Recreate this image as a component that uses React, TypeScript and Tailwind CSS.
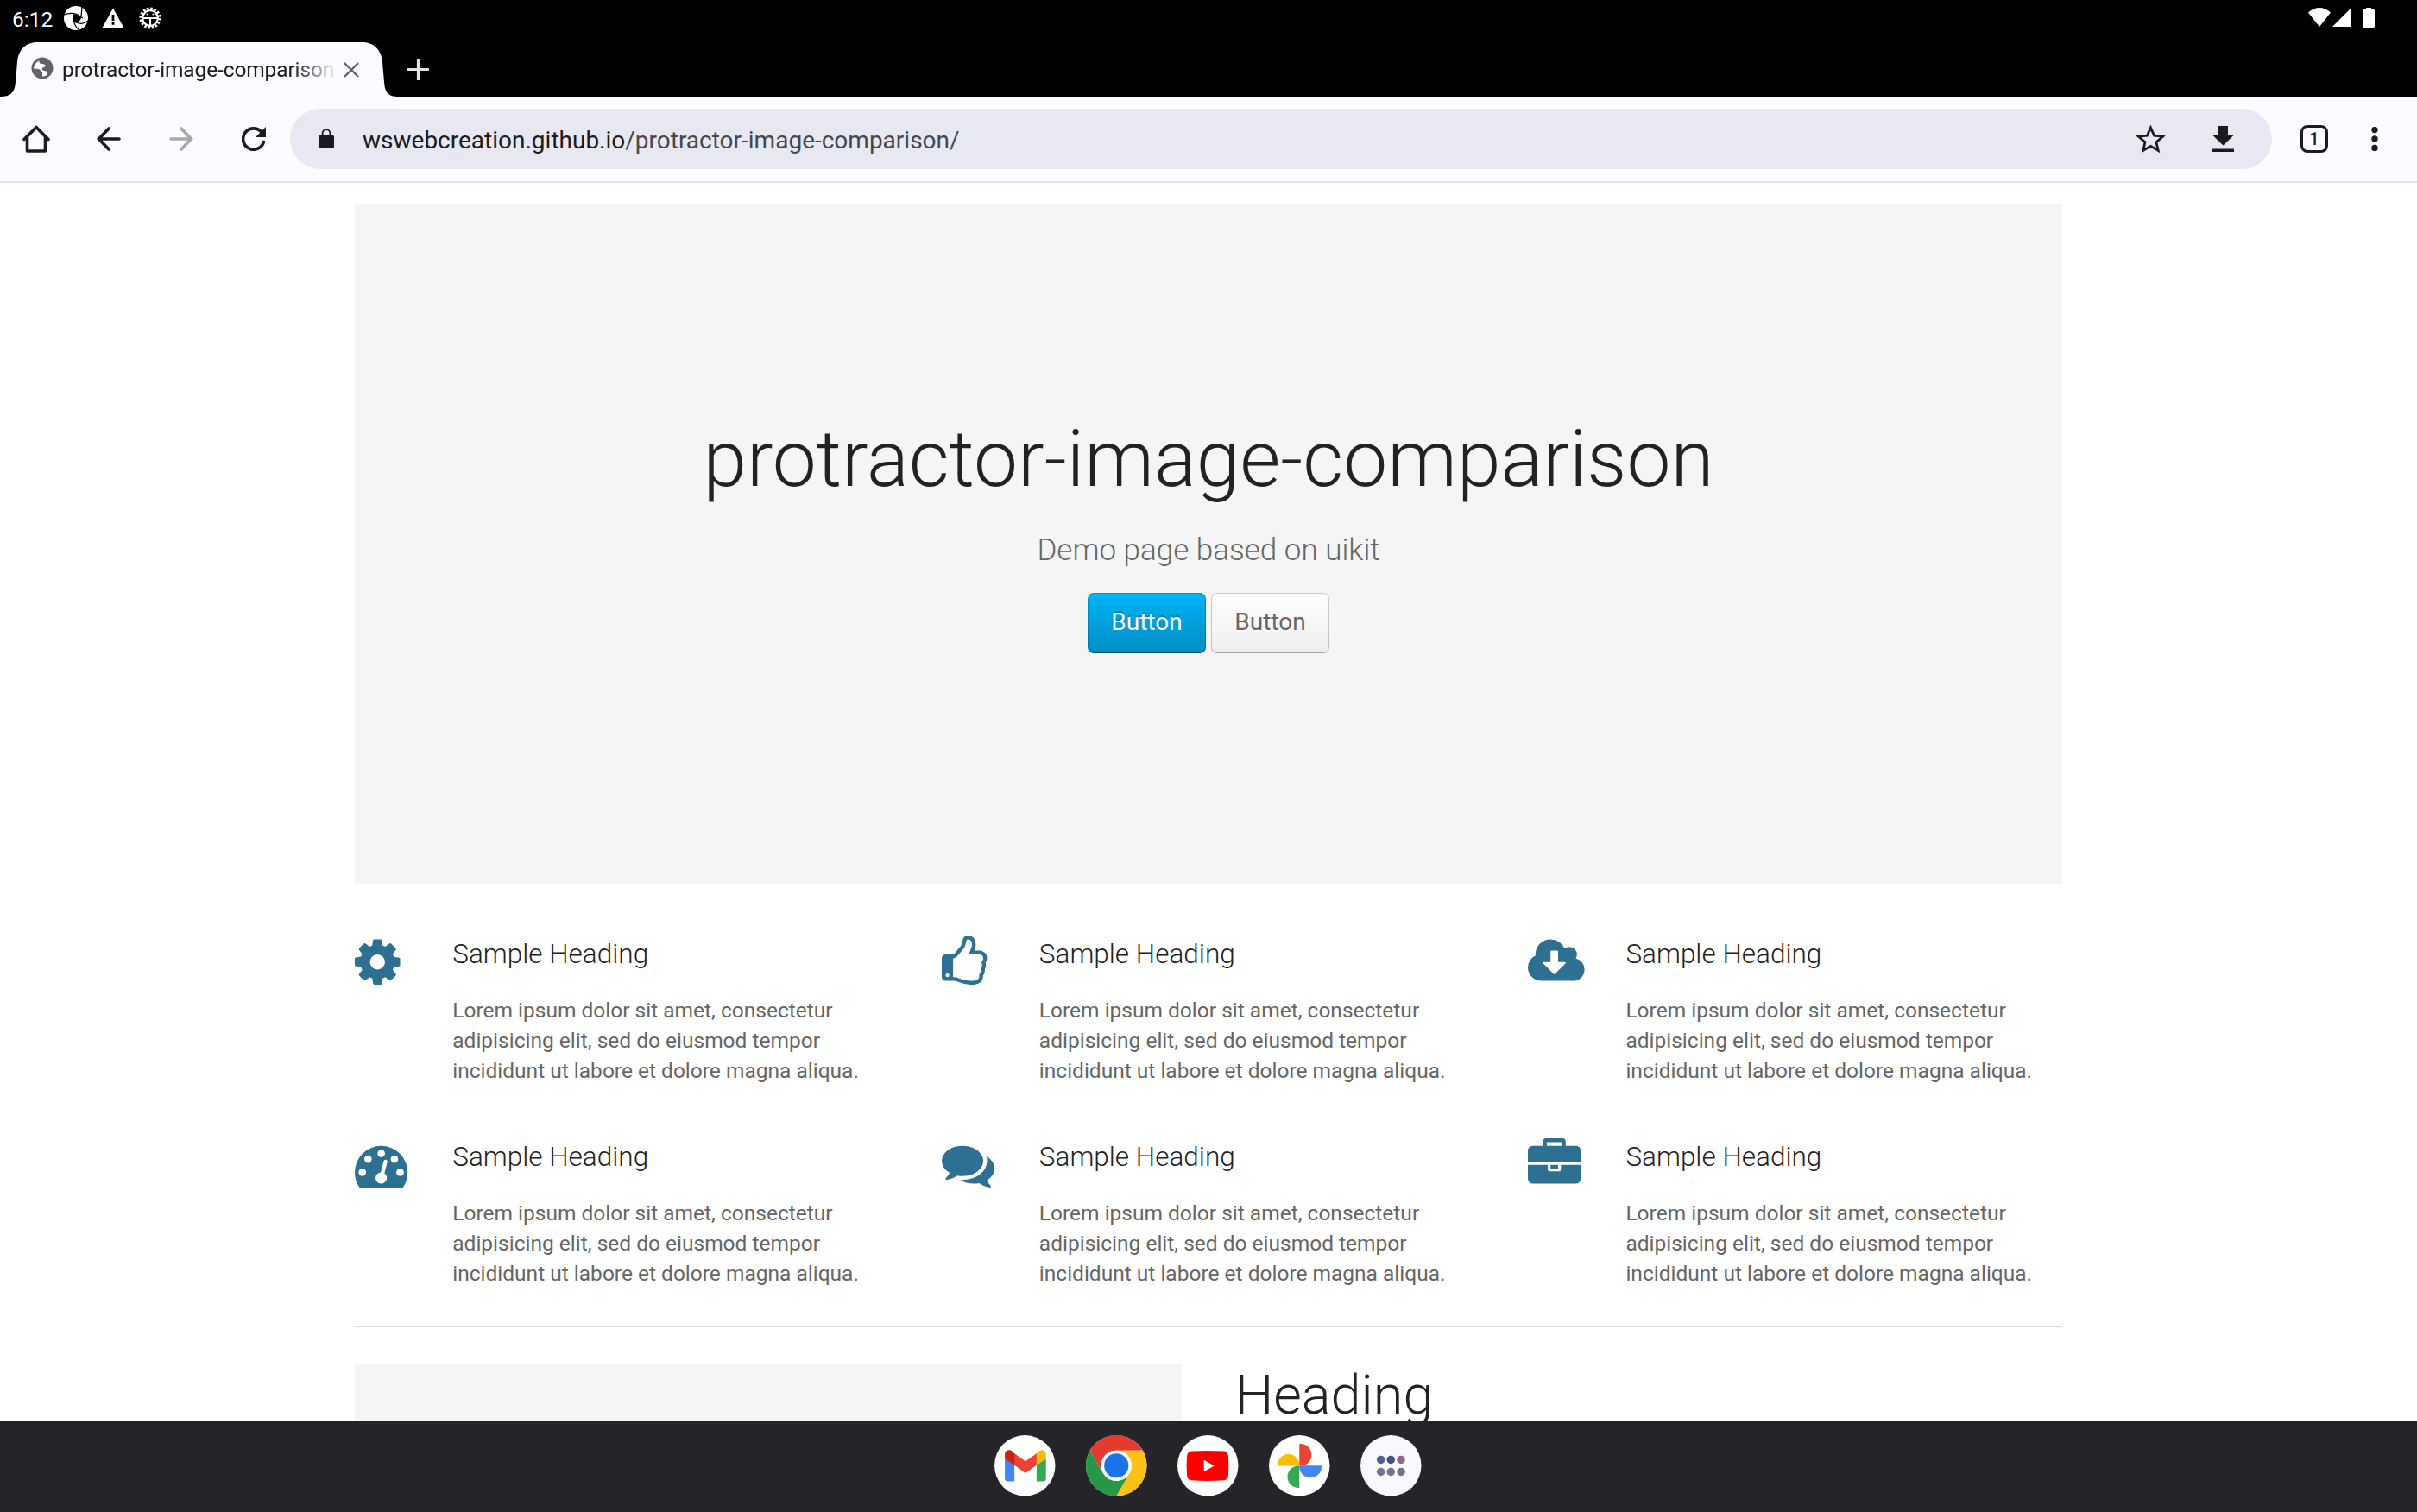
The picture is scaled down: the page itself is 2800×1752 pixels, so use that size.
import React from "react";

const COG =
  "M1152 896q0-106-75-181t-181-75-181 75-75 181 75 181 181 75 181-75 75-181zm512-109v222q0 12-8 23t-20 13l-185 28q-19 54-39 91 35 50 107 138 10 12 10 25t-9 23q-27 37-99 108t-94 71q-12 0-26-9l-138-108q-44 23-91 38-16 136-29 186-7 28-36 28h-222q-14 0-24.5-8.5t-11.5-21.5l-28-184q-49-16-90-37l-141 107q-10 9-25 9-14 0-25-11-126-114-165-168-7-10-7-23 0-12 8-23 15-21 51-66.5t54-70.5q-27-50-41-99l-183-27q-13-2-21-12.5t-8-23.5v-222q0-12 8-23t19-13l186-28q14-46 39-92-40-57-107-138-10-12-10-24 0-10 9-23 26-36 98.5-107.5t94.5-71.5q13 0 26 10l138 107q44-23 91-38 16-136 29-186 7-28 36-28h222q14 0 24.5 8.5t11.5 21.5l28 184q49 16 90 37l142-107q9-9 24-9 13 0 25 10 129 119 165 170 7 8 7 22 0 12-8 23-15 21-51 66.5t-54 70.5q26 50 41 98l183 28q13 2 21 12.5t8 23.5z";
const THUMB =
  "M384 1344q0-26-19-45t-45-19-45 19-19 45 19 45 45 19 45-19 19-45zm1152-576q0-51-39-89.5t-89-38.5h-352q0-58 48-159.5t48-160.5q0-98-32-145t-128-47q-26 26-38 85t-30.5 125.5-59.5 109.5q-22 23-77 91-4 5-23 30t-31.5 41-34.5 42.5-40 44-38.5 35.5-40 27-35.5 9h-32v640h32q13 0 31.5 3t33 6.5 38 11 35 11.5 35.5 12.5 29 10.5q211 73 342 73h121q192 0 192-167 0-26-5-56 30-16 47.5-52.5t17.5-73.5-18-69q53-50 53-119 0-25-10-55.5t-25-47.5q32-1 53.5-47t21.5-81zm128-1q0 89-49 163 9 33 9 69 0 77-38 144 3 21 3 43 0 101-60 178 1 139-85 219.5t-227 80.5h-129q-96 0-189.5-22.5t-216.5-65.5q-116-40-138-40h-288q-53 0-90.5-37.5t-37.5-90.5v-640q0-53 37.5-90.5t90.5-37.5h274q36-24 137-155 58-75 107-128 24-25 35.5-85.5t30.5-126.5 62-108q39-37 90-37 84 0 151 32.5t102 101.5 35 186q0 93-48 192h176q104 0 180 76t76 179z";
const CLOUD =
  "M1216 928q0-14-9-23t-23-9h-224v-352q0-13-9.5-22.5t-22.5-9.5h-192q-13 0-22.5 9.5t-9.5 22.5v352h-224q-13 0-22.5 9.5t-9.5 22.5q0 14 9 23l352 352q9 9 23 9t23-9l351-351q10-12 10-24zm640 224q0 159-112.5 271.5t-271.5 112.5h-1088q-185 0-316.5-131.5t-131.5-316.5q0-130 70-240t188-165q-2-30-2-43 0-212 150-362t362-150q156 0 285.5 87t188.5 231q71-62 166-62 106 0 181 75t75 181q0 76-41 138 130 31 213.5 135.5t83.5 238.5z";
const TACHO =
  "M384 1152q0-53-37.5-90.5t-90.5-37.5-90.5 37.5-37.5 90.5 37.5 90.5 90.5 37.5 90.5-37.5 37.5-90.5zm192-448q0-53-37.5-90.5t-90.5-37.5-90.5 37.5-37.5 90.5 37.5 90.5 90.5 37.5 90.5-37.5 37.5-90.5zm428 481l101-382q6-26-7.5-48.5t-38.5-29.5-48 6.5-30 39.5l-101 382q-60 5-107 43.5t-63 98.5q-20 77 20 146t117 89 146-20 89-117q16-60-6-117t-72-91zm660-33q0-53-37.5-90.5t-90.5-37.5-90.5 37.5-37.5 90.5 37.5 90.5 90.5 37.5 90.5-37.5 37.5-90.5zm-640-640q0-53-37.5-90.5t-90.5-37.5-90.5 37.5-37.5 90.5 37.5 90.5 90.5 37.5 90.5-37.5 37.5-90.5zm448 192q0-53-37.5-90.5t-90.5-37.5-90.5 37.5-37.5 90.5 37.5 90.5 90.5 37.5 90.5-37.5 37.5-90.5zm320 448q0 261-141 483-19 29-54 29h-1402q-35 0-54-29-141-221-141-483 0-182 71-348t191-286 286-191 348-71 348 71 286 191 191 286 71 348z";
const COMMENTS =
  "M1408 768q0 139-94 257t-256.5 186.5-353.5 68.5q-86 0-176-16-124 88-278 128-36 9-86 16h-3q-11 0-20.5-8t-11.5-21q-1-3-1-6.5t.5-6.5 2-6l2.5-5 3.5-5.5 4-5 4.5-5 4-4.5q5-6 23-25t26-29.5 22.5-29 25-38.5 20.5-44q-124-72-195-177t-71-224q0-139 94-257t256.5-186.5 353.5-68.5 353.5 68.5 256.5 186.5 94 257zm384 256q0 120-71 224.5t-195 176.5q10 24 20.5 44t25 38.5 22.5 29 26 29.5 23 25q1 1 4 4.5t4.5 5 4 5 3.5 5.5l2.5 5 2 6 .5 6.5-1 6.5q-3 14-13 22t-22 7q-50-7-86-16-154-40-278-128-90 16-176 16-271 0-472-132 58 4 88 4 161 0 309-45t264-129q125-92 192-212t67-254q0-77-23-152 129 71 204 178t75 230z";
const BRIEFCASE =
  "M640 256h512v-128h-512v128zm1152 640v480q0 66-47 113t-113 47h-1472q-66 0-113-47t-47-113v-480h672v160q0 26 19 45t45 19h320q26 0 45-19t19-45v-160h672zm-768 0v128h-256v-128h256zm768-480v384h-1792v-384q0-66 47-113t113-47h352v-160q0-40 28-68t68-28h576q40 0 68 28t28 68v160h352q66 0 113 47t47 113z";

const FEATURES = [
  { path: COG, viewBox: "128 0 1792 1792" },
  { path: THUMB, viewBox: "128 0 1792 1792" },
  { path: CLOUD, viewBox: "-64 0 1792 1792" },
  { path: TACHO, viewBox: "0 0 1792 1792" },
  { path: COMMENTS, viewBox: "0 0 1792 1792" },
  { path: BRIEFCASE, viewBox: "0 0 1792 1792" },
];

function StatusBar() {
  return (
    <div className="flex h-[49px] items-start justify-between pl-[14px] pr-[49px] text-white">
      <div className="flex items-start">
        <span className="w-[60px] pt-[6px] text-[24.5px] leading-[34px]">6:12</span>
        <svg className="mt-[7px] h-7 w-7" viewBox="0 0 28 28">
          <circle cx="14" cy="14" r="14" fill="#fff" />
          <g fill="none" stroke="#000" strokeWidth="1.2">
            <path d="M0 10Q8 7 15 9.500L22 14" />
            <path d="M20.500 0Q21.500 9 18.500 16" />
            <path d="M28 17Q22 22.500 14 19" />
            <path d="M18 28Q11 23 11 12" />
          </g>
          <path d="M10.500 9.500L15 9.500 20 13.500 18 17.500 13.500 19.500 11.500 18z" fill="#000" />
        </svg>
        <svg className="ml-4 mt-[9px] h-[23px] w-[26px]" viewBox="0 0 26 23">
          <path d="M13 .5L25.4 23H.6z" fill="#fff" />
          <path d="M11.6 8h2.8v7h-2.8zM11.6 17h2.8v2.7h-2.8z" fill="#000" />
        </svg>
        <svg className="ml-[17px] mt-2 h-[26px] w-[26px]" viewBox="-13 -13 26 26">
          <circle r="10.8" fill="none" stroke="#fff" strokeWidth="3.6" strokeDasharray="2.4 1.841" />
          <circle r="8.800" fill="none" stroke="#fff" strokeWidth="2.200" />
          <path d="M-9 0H9M0 0V10" stroke="#fff" strokeWidth="2" />
          <circle cx="-3.400" cy="-4.500" r="1" fill="#fff" />
          <circle cx="3.400" cy="-4.500" r="1" fill="#fff" />
        </svg>
      </div>
      <div className="flex items-start">
        <svg className="mt-[9px] h-[22px] w-[26px]" viewBox="0 0 26 22">
          <path d="M13 22L0 5.5Q13-5.500 26 5.500z" fill="#fff" />
        </svg>
        <svg className="ml-[2px] mt-[9px] h-[22px] w-[22px]" viewBox="0 0 22 22">
          <path d="M22 0V22H0z" fill="#fff" />
        </svg>
        <svg className="ml-[13px] mt-[9px] h-[23px] w-[14px]" viewBox="0 0 14 23">
          <path d="M4 0h6v2h3l1 1v19l-1 1H1l-1-1V3l1-1h3z" fill="#fff" />
        </svg>
      </div>
    </div>
  );
}

function TabStrip() {
  return (
    <div className="relative flex h-[63px] items-center">
      <svg className="absolute left-0 top-0 h-[63px] w-[462px]" viewBox="0 0 462 63">
        <path
          d="M0 63C12 63 17 59 18 46L20 23C21 9 30 0 43 0H420C433 0 442 9 443 23L445 46C446 59 450 63 462 63z"
          fill="#fdfbff"
        />
      </svg>
      <div className="relative flex h-full w-[462px] items-center">
        <svg className="ml-[36px] mt-[-3px] h-[26px] w-[26px] shrink-0" viewBox="0 0 26 26">
          <circle cx="13" cy="13" r="12.500" fill="#5f6368" />
          <path d="M9.500 4.500C5 6.500 3 10 3 13.500L8 14c2 0 3 1 3 2.500l2 .5v5.500c1 .3 3 0 5-1.200 1-1 1.500-3 1-4-.8-1.200-4.500-1-6-2.300-.6-1.500.6-3 2-3.200 1.600 0 2-1.200 1.500-2.300C15.500 8.500 14 8 12.500 8 10 8 9 6.500 9.500 4.500z" fill="#fdfbff" />
        </svg>
        <span className="ml-[10px] w-[322px] shrink-0 overflow-hidden whitespace-nowrap text-[24.5px] leading-8 tracking-[-0.13px] text-[#1b1b1f] [mask-image:linear-gradient(to_right,#000_83%,transparent_100%)]">
          protractor-image-comparison
        </span>
        <svg className="ml-[4px] h-[18px] w-[18px] shrink-0" viewBox="0 0 18 18">
          <path d="M1 1L17 17M17 1L1 17" stroke="#5c5b63" strokeWidth="2.200" />
        </svg>
      </div>
      <svg className="ml-[10px] h-[25px] w-[25px]" viewBox="0 0 25 25">
        <path d="M12.500 1V24M1 12.500H24" stroke="#e4e2e8" strokeWidth="3.2" strokeLinecap="round" />
      </svg>
    </div>
  );
}

function Toolbar() {
  return (
    <div className="flex h-[100px] items-center border-b-2 border-[#e1e2ec] bg-[#fdfbff]">
      <svg className="ml-[26px] h-8 w-8" viewBox="0 0 32 32" fill="none" stroke="#1b1b1f" strokeWidth="3.6" strokeLinejoin="round" strokeLinecap="round">
        <path d="M2 16.500L16 2.500 30 16.500" />
        <path d="M5.500 14V30H26.500V14" />
      </svg>
      <svg className="ml-[54px] h-7 w-7" viewBox="0 0 28 28" fill="none" stroke="#1b1b1f" strokeWidth="3.6" strokeLinecap="round">
        <path d="M26 14H3M14 2L2.500 14 14 26" />
      </svg>
      <svg className="ml-[56px] h-7 w-7" viewBox="0 0 28 28" fill="none" stroke="#a9a8ad" strokeWidth="3.6" strokeLinecap="round">
        <path d="M2 14H25M14 2L25.500 14 14 26" />
      </svg>
      <svg className="ml-[56px] h-7 w-7" viewBox="0 0 28 28">
        <path d="M25.500 17.500A12.200 12.200 0 1 1 22.500 5.500" fill="none" stroke="#1b1b1f" strokeWidth="3.6" strokeLinecap="round" />
        <path d="M28 0V12H16z" fill="#1b1b1f" />
      </svg>
      <div className="ml-7 flex h-[70px] w-[2296px] items-center rounded-full bg-[#e7e8f1]">
        <svg className="ml-[33px] h-6 w-[18px]" viewBox="0 0 18 24">
          <rect y="7.500" width="18" height="15.500" rx="2.500" fill="#1b1b1f" />
          <path d="M4.600 9V5.500a4.400 4.400 0 0 1 8.800 0V9" fill="none" stroke="#1b1b1f" strokeWidth="1.800" />
        </svg>
        <span className="ml-[33px] grow pt-[3px] text-[28px] leading-10 text-[#1b1b1f]">
          wswebcreation.github.io<span className="text-[#46464f]">/protractor-image-comparison/</span>
        </span>
        <svg className="h-[34px] w-[35px]" viewBox="0 0 35 34">
          <path d="M17.500 4L21.600 13.200 31.500 14.200 24 20.800 26.200 30.500 17.500 25.400 8.800 30.500 11 20.800 3.500 14.200 13.400 13.200z" fill="none" stroke="#1b1b1f" strokeWidth="2.800" />
        </svg>
        <svg className="ml-[54px] mr-[44px] h-[30px] w-[25px]" viewBox="0 0 25 30">
          <path d="M7 0H18V11H24.500L12.500 22.500.5 11H7zM0 26.500H25V30H0z" fill="#1b1b1f" />
        </svg>
      </div>
      <div className="ml-[33px] flex h-8 w-8 items-center justify-center rounded-lg border-[3.500px] border-[#1b1b1f] text-[20px] font-medium leading-none text-[#1b1b1f]">
        1
      </div>
      <svg className="ml-[50px] h-7 w-2" viewBox="0 0 8 28" fill="#1b1b1f">
        <circle cx="4" cy="3.600" r="3.700" />
        <circle cx="4" cy="14" r="3.700" />
        <circle cx="4" cy="24.400" r="3.700" />
      </svg>
    </div>
  );
}

function Feature({ path, viewBox }: { path: string; viewBox: string }) {
  return (
    <div className="flex h-[174px] items-start">
      <svg className="h-[61.25px] w-[61.25px] shrink-0 overflow-visible" viewBox={viewBox} fill="#2d7091">
        <path d={path} />
      </svg>
      <div className="ml-[51.750px] pt-[2.500px]">
        <h3 className="text-[31.500px] font-light leading-[38.500px] text-[#222]">Sample Heading</h3>
        <p className="mt-[27.750px] w-[500px] text-[24.500px] leading-[35px] text-[#666]">
          Lorem ipsum dolor sit amet, consectetur adipisicing elit, sed do eiusmod tempor incididunt ut labore et dolore magna aliqua.
        </p>
      </div>
    </div>
  );
}

function Page() {
  return (
    <div className="h-[1435px] overflow-hidden bg-white">
      <main className="mx-auto w-[1977.5px] pt-[24px]">
        <section className="flex h-[788px] flex-col items-center bg-[#f5f5f5]">
          <h1 className="mt-[248px] text-[91px] font-light leading-[96px] text-[#222]">protractor-image-comparison</h1>
          <p className="mt-[35px] text-[35px] font-light leading-[46px] text-[#666]">Demo page based on uikit</p>
          <div className="mt-[26px] flex gap-[6px]">
            <button className="h-[70px] w-[137px] rounded-[7px] border border-black/20 border-b-black/40 bg-[#009dd8] bg-linear-to-b from-[#00b4f5] to-[#008dc5] bg-origin-border pb-[3px] text-[28px] leading-[64px] text-white [text-shadow:0_-2px_0_rgba(0,0,0,0.2)]">
              Button
            </button>
            <button className="h-[70px] w-[137px] rounded-[7px] border border-black/20 border-b-black/30 bg-[#f7f7f7] bg-linear-to-b from-white to-[#eee] bg-origin-border pb-[3px] text-[28px] leading-[64px] text-[#666] [text-shadow:0_2px_0_#fff]">
              Button
            </button>
          </div>
        </section>
        <section className="mt-[60px] grid grid-cols-3 gap-x-[61.250px] gap-y-[61px]">
          {FEATURES.map((f, i) => (
            <Feature key={i} {...f} />
          ))}
        </section>
        <hr className="mt-[43.500px] border-t border-[#ddd]" />
        <section className="mt-[43px] grid grid-cols-2 gap-x-[61.250px]">
          <div className="h-[400px] bg-[#f5f5f5]" />
          <h2 className="text-[63px] font-light leading-[71px] text-[#222]">Heading</h2>
        </section>
      </main>
    </div>
  );
}

function Dock() {
  return (
    <div className="flex h-[105px] items-start justify-center gap-[35.500px] bg-[#252529] pr-[1px] pt-4">
      <svg className="h-[70.500px] w-[70.500px]" viewBox="0 0 70 70">
        <circle cx="35" cy="35" r="35" fill="#fff" />
        <path d="M12 27L23 34V53H15A3 3 0 0 1 12 50z" fill="#4285f4" />
        <path d="M59.300 27L48.500 34V53H56.300A3 3 0 0 0 59.300 50z" fill="#34a853" />
        <path d="M22.800 20.800L35.700 30 48.700 20.800V34.200L35.700 43.700 22.800 34.200z" fill="#ea4335" />
        <path d="M23 34.500L12 27.300V22C12 17.500 17.500 15.500 21 19L23 21z" fill="#c5221f" />
        <path d="M48.500 34.500L59.300 27V22C59.300 17.500 54 15.500 50.500 19L48.500 21z" fill="#fbbc04" />
      </svg>
      <svg className="h-[70.500px] w-[70.500px]" viewBox="0 0 70 70">
        <circle cx="35" cy="35" r="35" fill="#fff" />
        <path d="M35 0A35 35 0 0 1 65.300 17.500H35A17.500 17.500 0 0 0 19.800 43.700L4.700 17.500A35 35 0 0 1 35 0z" fill="#e33b2e" />
        <path d="M65.300 17.500A35 35 0 0 1 35 70L50.200 43.700A17.500 17.500 0 0 0 35 17.500z" fill="#fbc116" />
        <path d="M35 70A35 35 0 0 1 4.700 17.500L19.800 43.700A17.500 17.500 0 0 0 50.200 43.700z" fill="#279847" />
        <circle cx="35" cy="35" r="17.500" fill="#fff" />
        <circle cx="35" cy="35" r="14" fill="#1a73e8" />
      </svg>
      <svg className="h-[70.500px] w-[70.500px]" viewBox="0 0 70 70">
        <circle cx="35" cy="35" r="35" fill="#fff" />
        <path d="M16 18.300Q35 17.500 53.500 18.300Q58 19 58.500 24Q59.500 35 58.500 46.500Q58 51.500 53.500 52Q35 53 16 52Q11.500 51.500 11 46.500Q10 35 11 24Q11.500 19 16 18.300z" fill="#f00" />
        <path d="M30.500 28.500V42L42.500 35.200z" fill="#fff" />
      </svg>
      <svg className="h-[70.500px] w-[70.500px]" viewBox="0 0 70 70">
        <circle cx="35" cy="35" r="35" fill="#fff" />
        <path d="M35 10H36.400A12.650 12.650 0 0 1 36.400 35.300H35z" fill="#ea4335" />
        <path d="M60.600 35V36.200A12.700 12.700 0 0 1 35 36.200V35z" fill="#4285f4" />
        <path d="M35 60.600H34A12.650 12.650 0 0 1 34 35.300H35z" fill="#34a853" />
        <path d="M10 35.300V34.300A12.500 12.500 0 0 1 35 34.300V35.300z" fill="#fbbc04" />
      </svg>
      <svg className="h-[70.500px] w-[70.500px]" viewBox="0 0 70 70">
        <circle cx="35" cy="35" r="35" fill="#f9f8fe" />
        <circle cx="23.500" cy="28.200" r="4.700" fill="#4f5f94" />
        <circle cx="35" cy="28.200" r="4.700" fill="#415187" />
        <circle cx="46.700" cy="28.200" r="4.700" fill="#8b6a8b" />
        <circle cx="23.500" cy="42.200" r="4.700" fill="#70758a" />
        <circle cx="35" cy="42.200" r="4.700" fill="#70758a" />
        <circle cx="46.700" cy="42.200" r="4.700" fill="#70758a" />
      </svg>
    </div>
  );
}

export default function App() {
  return (
    <div className="h-[1752px] w-[2800px] overflow-hidden bg-black font-['Roboto',sans-serif]">
      <StatusBar />
      <TabStrip />
      <Toolbar />
      <Page />
      <Dock />
    </div>
  );
}
